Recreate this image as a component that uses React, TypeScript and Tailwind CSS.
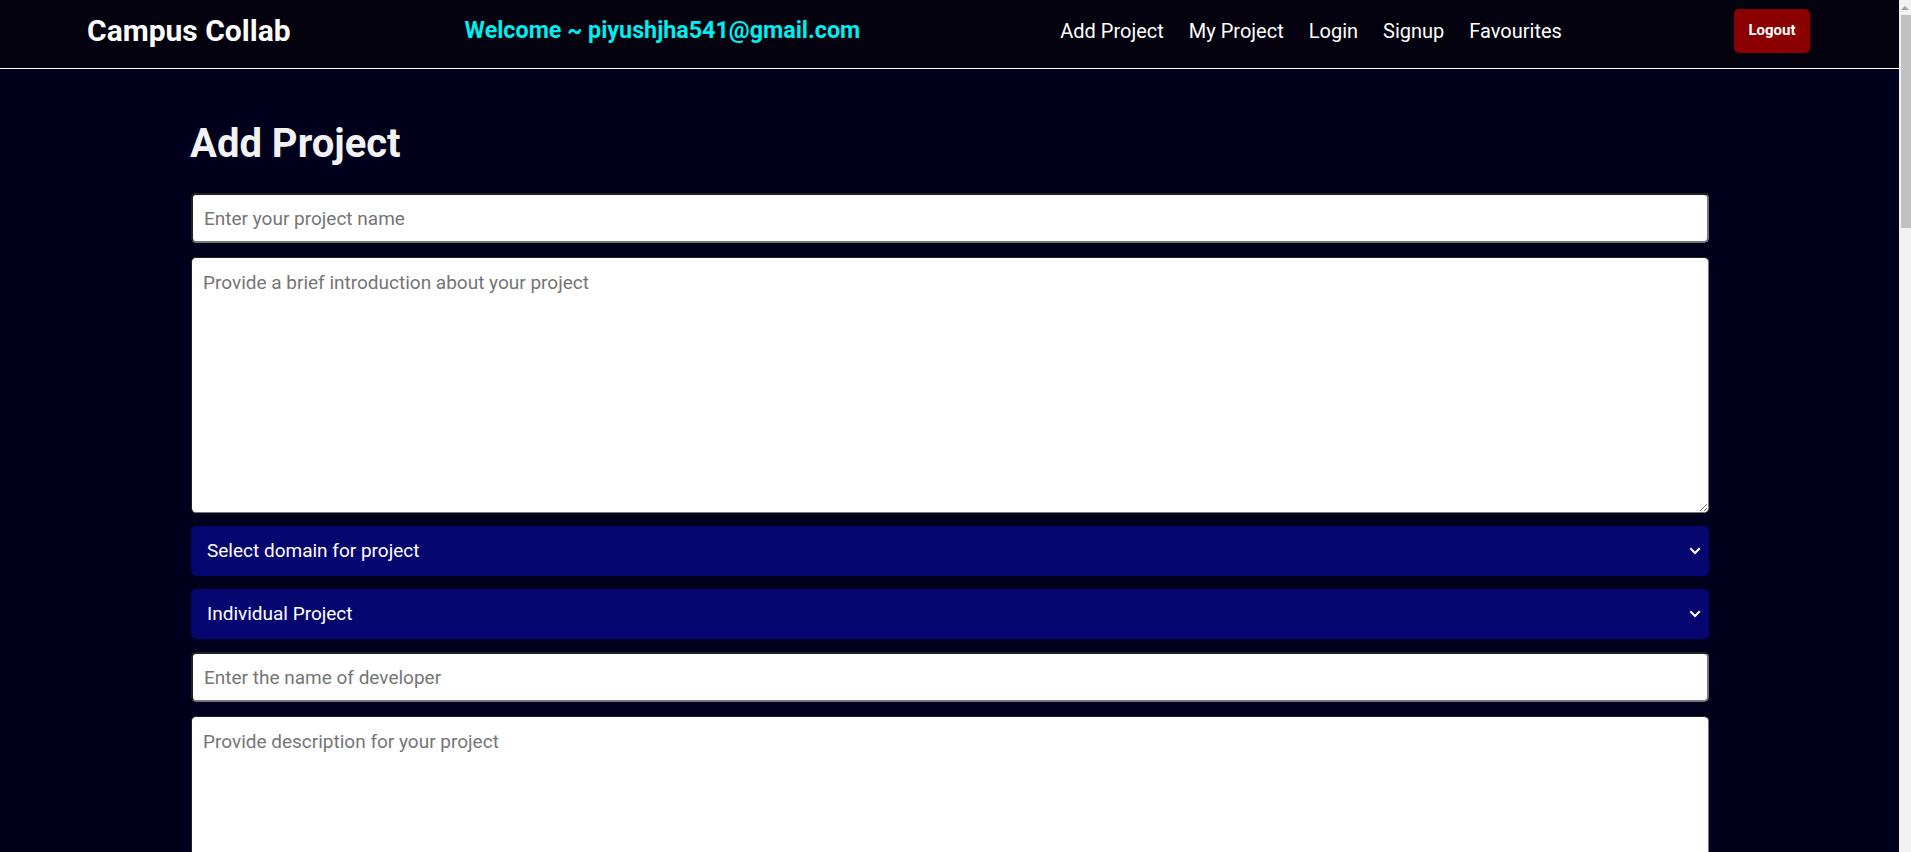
import React from "react";

const Chevron = () => (
  <svg width="12" height="8" viewBox="0 0 12 8" className="pointer-events-none absolute right-[8px] top-1/2 -translate-y-1/2">
    <path d="M2 2 L6 6 L10 2" fill="none" stroke="white" strokeWidth="2" strokeLinecap="square" />
  </svg>
);

const inputCls =
  "h-[50px] w-full bg-white rounded-[5px] border-2 [border-style:inset] border-[#767676] pl-[11px] text-[19px] placeholder:text-[#757575] outline-none";
const areaCls =
  "mt-[14px] h-[256px] w-full bg-white rounded-[5px] border [border-style:inset] border-[#767676] pl-[11px] pt-[11px] text-[19px] placeholder:text-[#757575] outline-none";
const selectCls =
  "appearance-none h-[50px] w-full rounded-[5px] bg-[#060670] text-white pl-[16px] text-[19px] outline-none";

export default function App() {
  return (
    <div className="h-[852px] flex overflow-hidden bg-[#00001c] font-['Roboto',sans-serif]">
      <div className="flex-1 min-w-0 h-full overflow-hidden">
        <nav className="h-[69px] bg-[#03020e] border-b border-white flex items-center pb-[6px] pl-[87px] pr-[89px]">
          <div className="text-white font-bold text-[30px] leading-none">Campus Collab</div>
          <div className="ml-[174px] text-[#00eeee] font-bold text-[23.3px] leading-none">Welcome ~ piyushjha541@gmail.com</div>
          <div className="ml-[200px] flex items-center gap-[25px] text-white text-[20px] leading-none">
            <a>Add Project</a>
            <a>My Project</a>
            <a>Login</a>
            <a>Signup</a>
            <a>Favourites</a>
          </div>
          <button className="ml-auto h-[44px] w-[76px] rounded-[5px] bg-[#8b0000] text-white font-bold text-[15px] mt-[-1px]">
            Logout
          </button>
        </nav>
        <main className="w-[1518px] ml-[191px] pt-[51px] pb-[40px]">
          <h1 className="text-[40px] leading-[48px] font-bold text-[#f2f2f2] mb-[25px] ml-[-1px]">Add Project</h1>
          <form className="flex flex-col">
            <input placeholder="Enter your project name" className={inputCls} />
            <textarea placeholder="Provide a brief introduction about your project" className={areaCls} />
            <div className="relative mt-[13px]">
              <select className={selectCls}>
                <option>Select domain for project</option>
              </select>
              <Chevron />
            </div>
            <div className="relative mt-[13px]">
              <select className={selectCls}>
                <option>Individual Project</option>
              </select>
              <Chevron />
            </div>
            <input placeholder="Enter the name of developer" className={"mt-[13px] " + inputCls} />
            <textarea placeholder="Provide description for your project" className={areaCls} />
          </form>
        </main>
      </div>
      <div className="w-[12px] h-full bg-[#f1f1f1] flex flex-col">
        <div className="h-[15px] flex items-center justify-center">
          <svg width="8" height="5" viewBox="0 0 8 5">
            <path d="M0 5 L4 1 L8 5 Z" fill="#a3a3a3" />
          </svg>
        </div>
        <div className="h-[213px] ml-[2px] bg-[#c1c1c1]" />
      </div>
    </div>
  );
}
